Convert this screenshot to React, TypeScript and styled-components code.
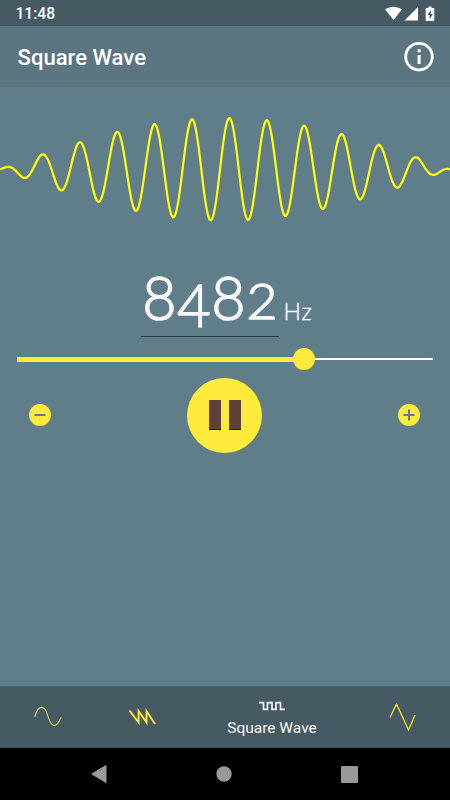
import React from 'react';
import styled, { createGlobalStyle } from 'styled-components';

const GlobalStyle = createGlobalStyle`
  * { box-sizing: border-box; }
  body { margin: 0; background: #607d8b; font-family: Roboto, sans-serif; }
  button { border: 0; padding: 0; background: none; font: inherit; color: inherit; }
  svg { display: block; }
`;

const Screen = styled.div`
  width: 450px;
  height: 800px;
  display: flex;
  flex-direction: column;
  background: #607d8a;
  overflow: hidden;
`;

const StatusBar = styled.header`
  height: 26px;
  flex: none;
  display: flex;
  align-items: center;
  justify-content: space-between;
  padding: 1px 15px 0 15.5px;
  background: #465a64;
  color: #fff;
  font-size: 15.6px;
  font-weight: 500;
`;

const AppBar = styled.div`
  height: 61px;
  flex: none;
  display: flex;
  align-items: center;
  justify-content: space-between;
  padding: 0 16px 0 17.5px;
  background: #5b7681;
  color: #fff;
`;

const Title = styled.h1`
  margin: 1px 0 0;
  font-size: 22.1px;
  line-height: 28px;
  font-weight: 500;
`;

const Main = styled.main`
  flex: 1;
  display: flex;
  flex-direction: column;
`;

const Readout = styled.div`
  height: 69px;
  margin: 21px 0 0 141px;
  display: flex;
  align-items: flex-start;
  color: #f7f7f7;
  font-family: Lato, sans-serif;
  font-weight: 300;
`;

const Value = styled.div`
  width: 138px;
  height: 69px;
  display: flex;
  padding-left: 1px;
  border-bottom: 1px solid #303c3f;
  line-height: 58px;
  -webkit-text-stroke: 1.5px #f7f7f7;
`;

const Digit = styled.span<{ $size: number; $drop?: number; $width: number; $stretch?: number }>`
  width: ${p => p.$width}px;
  margin-top: ${p => p.$drop ?? 0}px;
  height: 60px;
  flex: none;
  display: flex;
  justify-content: center;
  font-size: ${p => p.$size}px;
  transform: scaleX(${p => p.$stretch ?? 1});
`;

const Unit = styled.span`
  margin: 28px 0 0 4.5px;
  font-size: 23px;
  line-height: 30px;
  letter-spacing: 0.8px;
  -webkit-text-stroke: 0.4px #f7f7f7;
`;

const Slider = styled.div`
  height: 22px;
  margin: 11px 17px 0;
  display: flex;
  align-items: center;
`;

const Filled = styled.div`
  width: 277px;
  height: 5px;
  background: #ffeb3b;
`;

const Thumb = styled.div`
  width: 22px;
  height: 22px;
  margin-left: -1px;
  border-radius: 50%;
  background: #ffeb3b;
`;

const Rest = styled.div`
  flex: 1;
  height: 2px;
  background: #fff;
`;

const Controls = styled.div`
  height: 75px;
  margin-top: 7.5px;
  padding: 0 30px 0 29px;
  display: flex;
  align-items: center;
  justify-content: space-between;
`;

const RoundButton = styled.button<{ $size: number }>`
  width: ${p => p.$size}px;
  height: ${p => p.$size}px;
  display: flex;
  align-items: center;
  justify-content: center;
  gap: 8px;
  border-radius: 50%;
  background: #ffeb3b;
`;

const PauseBar = styled.span`
  width: 12px;
  height: 30px;
  background: #5d4037;
  border-bottom: 1px solid #35070c;
`;

const Tabs = styled.nav`
  height: 62px;
  flex: none;
  display: grid;
  grid-template-columns: 95px 94px 166px 95px;
  background: #465a64;
  border-top: 1px solid #50656f;
  border-bottom: 1px solid #3d505a;
`;

const Tab = styled.button`
  display: flex;
  flex-direction: column;
  align-items: center;
  justify-content: center;
  color: #f7f7f7;
  font-size: 15.5px;
  line-height: 19px;
`;

const TabLabel = styled.span`
  margin: 8px 0 -4px;
`;

const SystemBar = styled.footer`
  height: 52px;
  flex: none;
  display: flex;
  align-items: center;
  justify-content: space-between;
  padding: 0 92px 0 91px;
  background: #000;
`;

const wavePath = Array.from({ length: 451 }, (_, x) => {
  const envelope = 51.3 * Math.sin((Math.PI * x) / 450);
  const y = 82.3 - envelope * Math.cos((2 * Math.PI * (x - 229.4)) / 37.45);
  return `${x ? 'L' : 'M'}${x} ${y.toFixed(2)}`;
}).join('');

const Wave = () => (
  <svg width="450" height="160" viewBox="0 0 450 160">
    <path d={wavePath} fill="none" stroke="#ffff0c" strokeWidth="2.2" />
  </svg>
);

const StatusIcons = () => (
  <svg width="50" height="16" viewBox="385 5 50 16" fill="#fff">
    <path d="M385 8.200Q393.500 3.200 402 8.200L393.500 19Z" />
    <path d="M418 6V19.500H404.500Z" />
    <path d="M426.500 7h2V5.500h3V7h2q.8 0 .8.8v11.400q0 .8-.8.8h-7q-.8 0-.8-.8V7.800q0-.8.8-.8Z" />
    <path d="M431 9l-3.600 5h2.200v4.300l3.300-5.300h-2.100Z" fill="#465a64" />
  </svg>
);

const InfoIcon = () => (
  <svg width="30" height="30" viewBox="0 0 30 30">
    <circle cx="15" cy="14.700" r="13.300" fill="none" stroke="#fff" strokeWidth="2.800" />
    <path d="M13.600 7.300h3v3h-3ZM13.600 13h3v9h-3Z" fill="#fff" />
  </svg>
);

export default function App() {
  return (
    <>
      <GlobalStyle />
      <Screen>
        <StatusBar>
          <span>11:48</span>
          <StatusIcons />
        </StatusBar>
        <AppBar>
          <Title>Square Wave</Title>
          <InfoIcon />
        </AppBar>
        <Main>
          <Wave />
          <Readout>
            <Value>
              <Digit $size={61} $width={35} $stretch={0.97}>8</Digit>
              <Digit $size={60} $width={34} $drop={7} $stretch={0.97}>4</Digit>
              <Digit $size={61} $width={35} $stretch={0.97}>8</Digit>
              <Digit $size={50} $width={32} $drop={3} $stretch={1.07}>2</Digit>
            </Value>
            <Unit>Hz</Unit>
          </Readout>
          <Slider>
            <Filled />
            <Thumb />
            <Rest />
          </Slider>
          <Controls>
            <RoundButton $size={22} aria-label="Decrease">
              <svg width="12" height="12"><path d="M.5 6h11" stroke="#607d8a" strokeWidth="2" /></svg>
            </RoundButton>
            <RoundButton $size={75} aria-label="Pause">
              <PauseBar />
              <PauseBar />
            </RoundButton>
            <RoundButton $size={22} aria-label="Increase">
              <svg width="12" height="12"><path d="M.5 6h11M6 .5v11" stroke="#607d8a" strokeWidth="2" /></svg>
            </RoundButton>
          </Controls>
        </Main>
        <Tabs>
          <Tab aria-label="Sine">
            <svg width="28" height="22" viewBox="0 0 28 22">
              <path d="M.8 11C4 -1.500 10.500-1.500 13.500 9S21.500 25 27.200 11" fill="none" stroke="#d8d24a" strokeWidth="1.100" />
            </svg>
          </Tab>
          <Tab aria-label="Sawtooth">
            <svg width="28" height="18" viewBox="0 0 28 18">
              <path d="M1.500 2.500L10.600 14.500V3L18.500 14.500V3L27 16" fill="none" stroke="#ffeb3b" strokeWidth="1.900" />
            </svg>
          </Tab>
          <Tab>
            <svg width="28" height="10" viewBox="0 0 28 10">
              <path d="M1 1.700H5.500V8.300H9.500V1.700H14V8.300H18V1.700H22.500V8.300H27" fill="none" stroke="#f7f7f7" strokeWidth="1.700" />
            </svg>
            <TabLabel>Square Wave</TabLabel>
          </Tab>
          <Tab aria-label="Triangle">
            <svg width="28" height="28" viewBox="0 0 28 28">
              <path d="M1 14.500L7.500 1L19.500 27L26 12" fill="none" stroke="#ffeb3b" strokeWidth="1.200" />
            </svg>
          </Tab>
        </Tabs>
        <SystemBar>
          <svg width="16" height="18" viewBox="0 0 16 18"><path d="M15 .5V17.500L.8 9Z" fill="#999" stroke="#999" strokeWidth="1" strokeLinejoin="round" /></svg>
          <svg width="16" height="16"><circle cx="8" cy="8" r="7.700" fill="#999" /></svg>
          <svg width="17" height="17"><rect width="17" height="17" rx="1" fill="#999" /></svg>
        </SystemBar>
      </Screen>
    </>
  );
}
